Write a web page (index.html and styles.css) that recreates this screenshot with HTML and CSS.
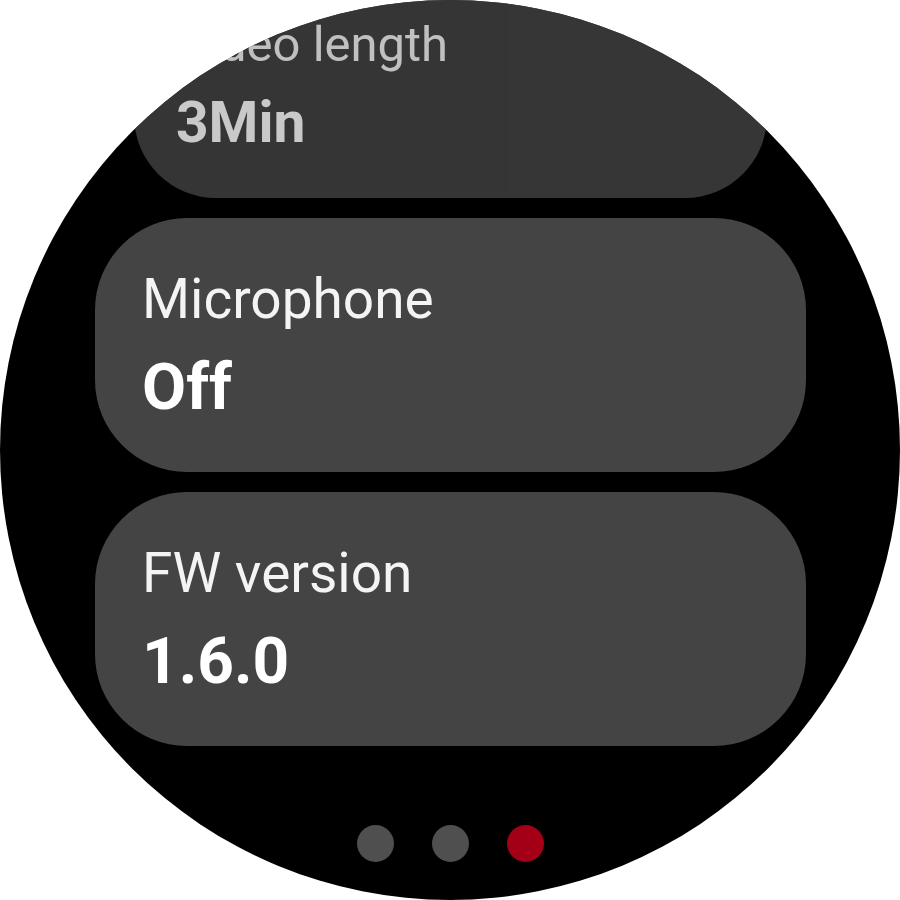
FILE: index.html
```html
<!DOCTYPE html>
<html lang="en">
<head>
<meta charset="utf-8">
<title>Settings</title>
<link rel="stylesheet" href="styles.css">
</head>
<body>
<div class="watch">
  <div class="list">
    <div class="card card-faded">
      <div class="label">Video length</div>
      <div class="value">3Min</div>
    </div>
    <div class="card">
      <div class="label">Microphone</div>
      <div class="value">Off</div>
    </div>
    <div class="card">
      <div class="label">FW version</div>
      <div class="value">1.6.0</div>
    </div>
  </div>
  <div class="dots">
    <span class="dot"></span>
    <span class="dot"></span>
    <span class="dot dot-active"></span>
  </div>
</div>
</body>
</html>
```

FILE: styles.css
```css
html, body {
  margin: 0;
  padding: 0;
  background: #ffffff;
}

.watch {
  width: 900px;
  height: 900px;
  border-radius: 50%;
  background: #000000;
  overflow: hidden;
  display: flex;
  flex-direction: column;
  align-items: center;
  font-family: Roboto, "Liberation Sans", sans-serif;
}

.list {
  display: flex;
  flex-direction: column;
  gap: 20px;
  margin-top: -56px;
  padding-left: 1px;
}

.card {
  box-sizing: border-box;
  width: 711px;
  height: 254px;
  background: #444444;
  border-radius: 92px;
  padding: 51px 0 0 47px;
  color: #ffffff;
}

.card-faded {
  transform: scale(0.89);
  transform-origin: center bottom;
  opacity: 0.79;
}

.label {
  font-size: 55px;
  font-weight: 400;
  line-height: 60px;
  color: #f4f4f4;
  white-space: nowrap;
}

.value {
  margin-top: 23px;
  font-size: 64px;
  font-weight: 700;
  line-height: 72px;
  white-space: nowrap;
}

.dots {
  display: flex;
  gap: 38px;
  margin-top: 79px;
}

.dot {
  width: 37px;
  height: 37px;
  border-radius: 50%;
  background: #4f4f4f;
}

.dot-active {
  background: #a30018;
}
```
